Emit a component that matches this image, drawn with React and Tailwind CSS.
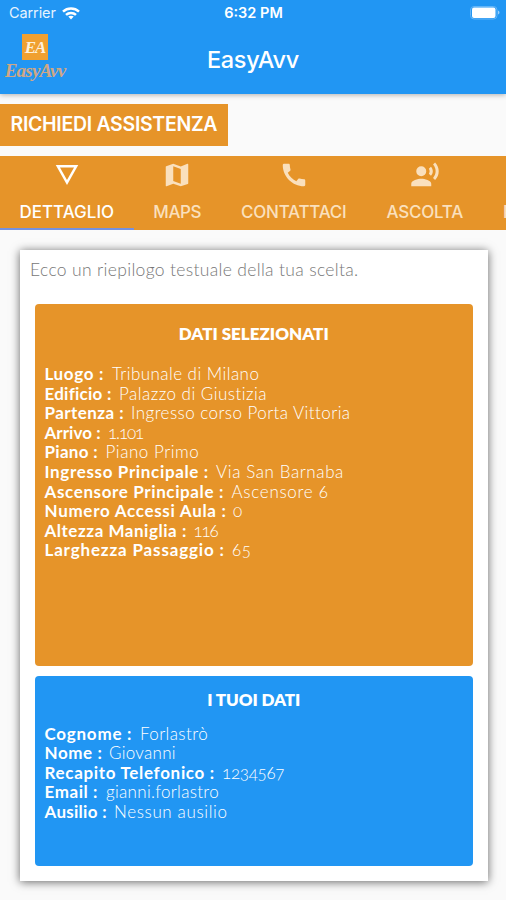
import React from "react";

const selected = [
  ["Luogo :", "Tribunale di Milano", "w-[67.5px]", "tracking-[0.65px]", "tracking-[0.45px]"],
  ["Edificio :", "Palazzo di Giustizia", "w-[74.5px]", "tracking-[0.25px]", "tracking-[0.48px]"],
  ["Partenza :", "Ingresso corso Porta Vittoria", "w-[86.5px]", "tracking-[0.45px]", "tracking-[0.44px]"],
  ["Arrivo :", "1.101", "w-[63.5px]", "tracking-[0.05px]", "tracking-[-1.1px]"],
  ["Piano :", "Piano Primo", "w-[61px]", "tracking-[0.3px]", "tracking-[0.55px]"],
  ["Ingresso Principale :", "Via San Barnaba", "w-[171.5px]", "tracking-[0.65px]", "tracking-[0.6px]"],
  ["Ascensore Principale :", "Ascensore 6", "w-[187px]", "tracking-[0.62px]", "tracking-[0.7px]"],
  ["Numero Accessi Aula :", "0", "w-[188.5px]", "tracking-[0.7px]", ""],
  ["Altezza Maniglia :", "116", "w-[149px]", "tracking-[0.53px]", "tracking-[-1.2px]"],
  ["Larghezza Passaggio :", "65", "w-[187.5px]", "tracking-[0.83px]", "tracking-[0.5px]"],
];

const personal = [
  ["Cognome :", "Forlastrò", "w-[95.5px]", "tracking-[0.76px]", "tracking-[0.4px]"],
  ["Nome :", "Giovanni", "w-[64.5px]", "tracking-[0.58px]", "tracking-[0.3px]"],
  ["Recapito Telefonico :", "1234567", "w-[177.5px]", "tracking-[0.68px]", "tracking-[-0.3px]"],
  ["Email :", "gianni.forlastro", "w-[61.5px]", "tracking-[0.57px]", "tracking-[0.3px]"],
  ["Ausilio :", "Nessun ausilio", "w-[69.5px]", "tracking-[0.28px]", "tracking-[0.63px]"],
];

function Rows({ rows }) {
  return (
    <div className="flex flex-col pl-[9.5px] text-[17px] leading-[19.6px] whitespace-nowrap text-white">
      {rows.map(([label, value, width, labelTracking, valueTracking]) => (
        <div key={label} className="flex h-[19.6px]">
          <span className={`shrink-0 font-bold ${width} ${labelTracking}`}>{label}</span>
          <span className={`font-light oldstyle-nums ${valueTracking}`}>{value}</span>
        </div>
      ))}
    </div>
  );
}

function Icon({ d }) {
  return (
    <svg viewBox="0 0 24 24" className="h-[30px] w-[30px]" fill="currentColor">
      <path d={d} />
    </svg>
  );
}

const tabs = [
  ["DETTAGLIO", "M3 4l9 16 9-16H3zm3.38 2h11.25L12 16 6.38 6z", "w-[133.5px] text-white", ""],
  ["MAPS", "M20.5 3l-.16.03L15 5.1 9 3 3.36 4.9c-.21.07-.36.25-.36.48V20.5c0 .28.22.5.5.5l.16-.03L9 18.9l6 2.1 5.64-1.9c.21-.07.36-.25.36-.48V3.5c0-.28-.22-.5-.5-.5zM15 19l-6-2.11V5l6 2.11V19z", "w-[87.5px] text-[#fae0bd]", "tracking-[-0.4px]"],
  ["CONTATTACI", "M20.01 15.38c-1.23 0-2.42-.2-3.53-.56-.35-.12-.74-.03-1.01.24l-1.57 1.97c-2.83-1.35-5.48-3.9-6.89-6.83l1.95-1.66c.27-.28.35-.67.24-1.02-.37-1.11-.56-2.3-.56-3.53 0-.54-.45-.99-.99-.99H4.19C3.65 3 3 3.24 3 3.99 3 13.28 10.73 21 20.01 21c.71 0 .99-.63.99-1.18v-3.45c0-.54-.45-.99-.99-.99z", "w-[145.5px] text-[#fae0bd]", "tracking-[-0.25px]"],
  ["ASCOLTA", "M5 9a4 4 0 1 0 8 0a4 4 0 1 0-8 0zM9 15c-2.67 0-8 1.34-8 4v2h16v-2c0-2.66-5.33-4-8-4zM16.76 5.36l-1.68 1.69c.84 1.18.84 2.71 0 3.89l1.68 1.69c2.02-2.02 2.02-5.07 0-7.27zM20.07 2l-1.63 1.63c2.77 3.02 2.77 7.56 0 10.74L20.07 16c3.9-3.89 3.91-9.95 0-14z", "w-[116.5px] text-[#fae0bd]", "tracking-[-0.25px]"],
];

export default function App() {
  return (
    <div className="flex h-[900px] w-[506px] flex-col overflow-hidden bg-[#fafafa] font-[Lato,sans-serif]">
      <header className="z-10 h-[93.5px] shrink-0 bg-[#2196f3] font-[Inter,sans-serif] text-white shadow-[0_1px_5px_rgba(0,0,0,0.3)]">
        <div className="grid h-[26px] grid-cols-3 items-center pr-[6px] pl-[9px] text-[14.5px] leading-none">
          <div className="flex items-center gap-[6px]">
            <span className="tracking-[-0.1px] text-[#e6f3fe]">Carrier</span>
            <svg viewBox="0 0 18 13" className="h-[13px] w-[18px]" fill="none" stroke="white" strokeWidth="2.5">
              <path d="M1 4.6C5.5.5 12.5.5 17 4.6" />
              <path d="M4 7.9C6.8 5.3 11.2 5.3 14 7.9" />
              <path d="M6.3 9.6C7.8 8.3 10.2 8.3 11.7 9.6L9 12.5z" fill="white" stroke="none" />
            </svg>
          </div>
          <span className="pr-[2px] text-center font-semibold">6:32 PM</span>
          <svg viewBox="0 0 30 14" className="h-[14px] w-[30px] justify-self-end">
            <rect x="0.5" y="0.5" width="26.5" height="12.5" rx="3.5" fill="none" stroke="#64b5f7" />
            <rect x="2" y="1.5" width="23.5" height="10.5" rx="2" fill="white" />
            <path d="M28 4.5c2 .8 2 3.2 0 4z" fill="#9bcffa" />
          </svg>
        </div>
        <div className="grid h-[67.5px] grid-cols-3 items-center">
          <div className="flex w-[70px] flex-col items-center self-start pt-[8px] font-['Liberation_Serif',serif] leading-none font-bold italic">
            <div className="flex h-[26px] w-[26px] items-center justify-center bg-[#f0a030] text-[17px] tracking-[-1px] text-[#fdf0dc]">EA</div>
            <div className="mt-[1px] text-[19px] tracking-[-0.8px] text-[#d0a785]">EasyAvv</div>
          </div>
          <h1 className="text-center text-[23.5px] font-medium tracking-[-0.3px]">EasyAvv</h1>
        </div>
      </header>

      <button className="mt-[10px] flex h-[42.5px] w-[228px] shrink-0 items-center bg-[#e69429] pl-[10.5px] font-[Inter,sans-serif] text-[19.5px] font-semibold tracking-[-0.3px] whitespace-nowrap text-white">
        RICHIEDI ASSISTENZA
      </button>

      <nav className="mt-[10px] flex h-[74px] w-[560px] shrink-0 bg-[#e69429] font-[Inter,sans-serif] text-[17px] font-medium">
        {tabs.map(([label, d, style, tracking], i) => (
          <div
            key={label}
            className={`flex shrink-0 flex-col items-center border-b-[2.5px] pt-[4px] ${i === 0 ? "border-[#7591e0]" : "border-transparent"} ${style}`}
          >
            <Icon d={d} />
            <span className={`mt-[12px] leading-[20px] whitespace-nowrap ${tracking}`}>{label}</span>
          </div>
        ))}
        <div className="pt-[46px] pl-[20px] leading-[20px] text-[#fae0bd]">P</div>
      </nav>

      <main className="mt-[20px] ml-[20px] flex h-[631px] w-[467.5px] shrink-0 flex-col bg-white px-[15px] shadow-[0_1px_9px_rgba(0,0,0,0.6)]">
        <p className="-ml-[5px] h-[54px] pt-[8px] text-[17.5px] leading-[24px] font-light tracking-[0.33px] whitespace-nowrap text-[#777]">
          Ecco un riepilogo testuale della tua scelta.
        </p>
        <section className="h-[362px] shrink-0 rounded-[4px] bg-[#e69429] pt-[20px]">
          <h2 className="mb-[20px] text-center text-[17px] leading-[20px] font-extrabold text-white">DATI SELEZIONATI</h2>
          <Rows rows={selected} />
        </section>
        <section className="mt-[9.5px] h-[190.5px] shrink-0 rounded-[4px] bg-[#2196f3] pt-[14px]">
          <h2 className="mb-[14px] text-center text-[17px] leading-[20px] font-extrabold tracking-[-0.1px] text-white">I TUOI DATI</h2>
          <Rows rows={personal} />
        </section>
      </main>
    </div>
  );
}
